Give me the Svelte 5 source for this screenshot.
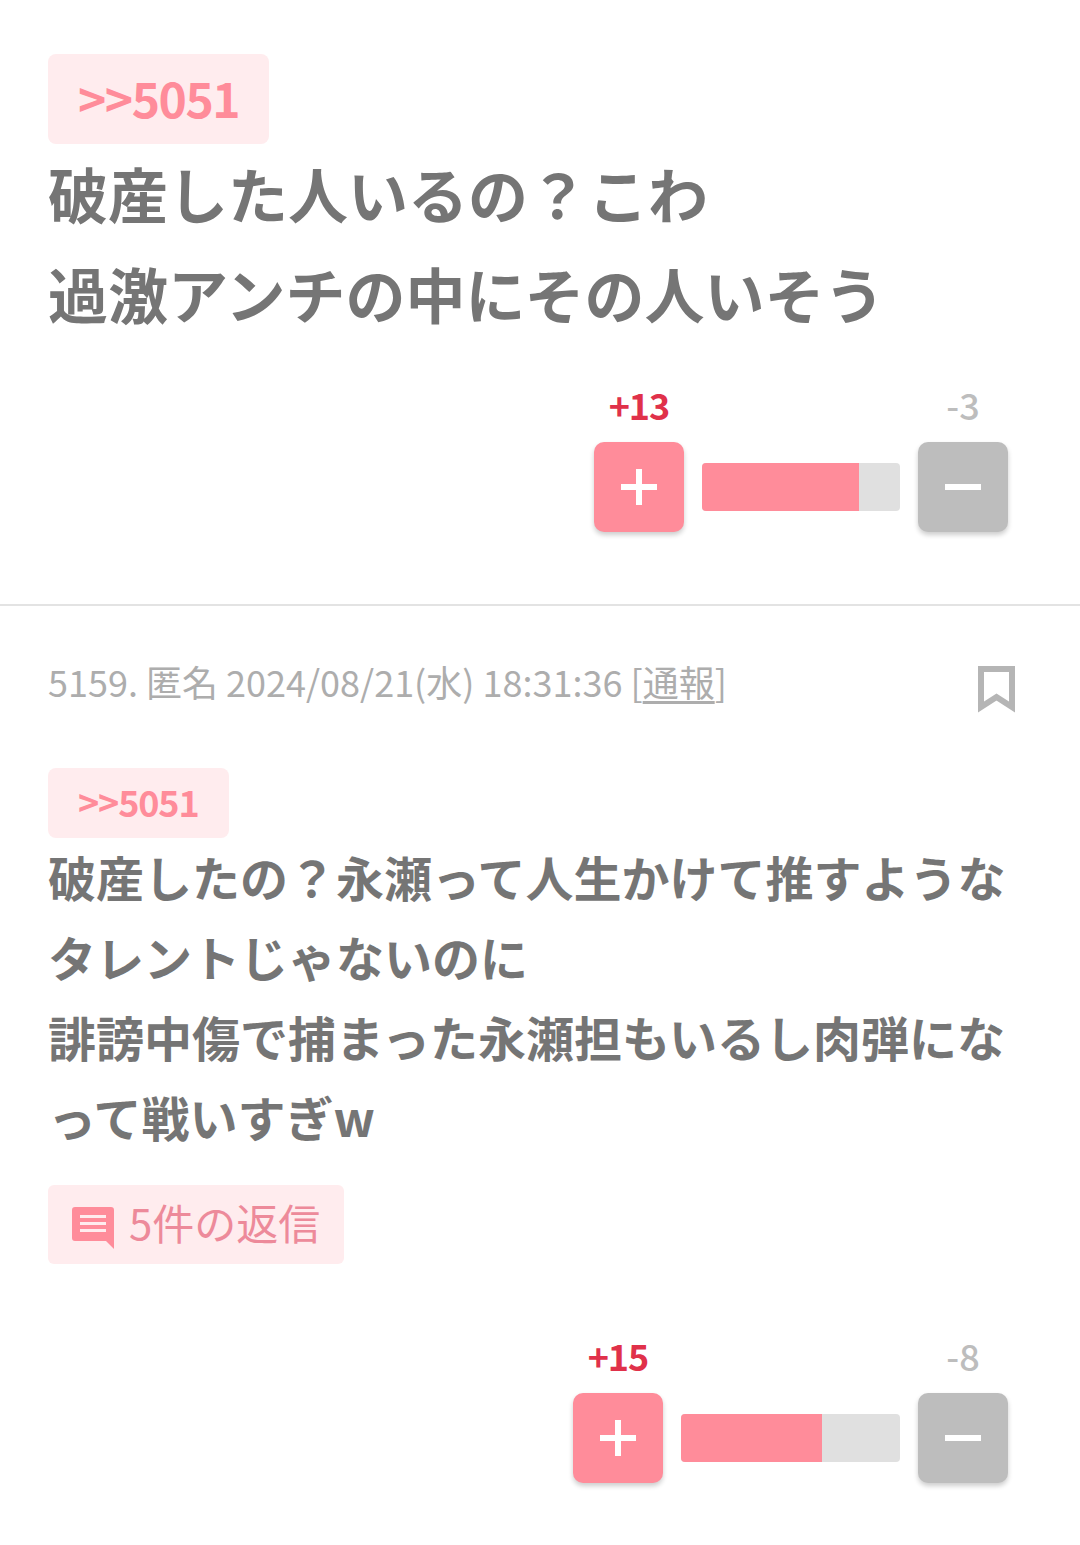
<script>
  const replies = [
    {
      big: true,
      lines: ['破産した人いるの？こわ', '過激アンチの中にその人いそう'],
      plus: 13,
      minus: 3,
      trackWidth: 198,
      pct: 79.5
    },
    {
      big: false,
      meta: { no: '5159.', name: '匿名', date: '2024/08/21(水) 18:31:36' },
      lines: ['破産したの？永瀬って人生かけて推すようなタレントじゃないのに', '誹謗中傷で捕まった永瀬担もいるし肉弾になって戦いすぎw'],
      replies: 5,
      plus: 15,
      minus: 8,
      trackWidth: 219,
      pct: 64.5
    }
  ];
</script>

<main class="page">
  {#each replies as r}
    <article class="post" class:big={r.big}>
      {#if r.meta}
        <div class="meta">
          <span>{r.meta.no} {r.meta.name} {r.meta.date} [<u>通報</u>]</span>
          <svg class="bookmark" viewBox="0 0 37 47" fill="none" stroke="#b5b5b5" stroke-width="6">
            <path d="M3 3h31v38L18.500 31 3 41z" />
          </svg>
        </div>
      {/if}
      <span class="anchor">&gt;&gt;5051</span>
      <div class="body">
        {#each r.lines as line}
          <div>{line}</div>
        {/each}
      </div>
      {#if r.replies}
        <span class="reply-btn">
          <svg viewBox="0 0 42 42" width="42" height="42">
            <path fill="#ff8c9a" d="M3 0h36a3 3 0 0 1 3 3v39l-8-8H3a3 3 0 0 1-3-3V3a3 3 0 0 1 3-3z" />
            <path fill="#ffecee" d="M8 8h26v3H8zM8 15h26v3H8zM8 22h26v3H8z" />
          </svg>
          <span class="reply-label">{r.replies}件の返信</span>
        </span>
      {/if}
      <div class="votes">
        <div class="vote">
          <span class="count plus">+{r.plus}</span>
          <span class="btn pink">
            <svg viewBox="0 0 36 36" width="36" height="36"><path fill="#fff" d="M15 0h6v15h15v6H21v15h-6V21H0v-6h15z" /></svg>
          </span>
        </div>
        <div class="track" style="width: {r.trackWidth}px"><div class="fill" style="width: {r.pct}%"></div></div>
        <div class="vote">
          <span class="count minus">-{r.minus}</span>
          <span class="btn grey">
            <svg viewBox="0 0 36 36" width="36" height="36"><path fill="#fff" d="M0 15h36v6H0z" /></svg>
          </span>
        </div>
      </div>
    </article>
  {/each}
</main>

<style>
  :global(body) {
    margin: 0;
    background: #fff;
  }
  .page {
    font-family: "Noto Sans CJK JP", "Noto Sans", sans-serif;
    color: #757575;
    height: 1545px;
    overflow: hidden;
  }
  .post {
    padding: 54px 72px 72px 48px;
  }
  .post.big {
    border-bottom: 2px solid #e3e3e3;
  }
  .post:not(.big) {
    padding-top: 44px;
  }
  .meta {
    display: flex;
    justify-content: space-between;
    margin-right: -7px;
    font-size: 36px;
    line-height: 62px;
    color: #adadad;
    margin-bottom: 52px;
    height: 66px;
  }
  .meta u {
    text-underline-offset: 4px;
  }
  .bookmark {
    width: 37px;
    height: 47px;
    margin-top: 16px;
  }
  .anchor {
    display: block;
    width: fit-content;
    background: #ffecee;
    color: #ff8c9a;
    font-weight: 700;
    font-size: 36px;
    line-height: 66px;
    padding: 0 30px 4px;
    border-radius: 8px;
    letter-spacing: -1.15px;
  }
  .big .anchor {
    font-size: 48px;
    line-height: 86px;
    letter-spacing: -1.45px;
  }
  .body {
    font-size: 48px;
    line-height: 80px;
    font-weight: 700;
    margin-right: -12px;
    margin-top: -2px;
  }
  .big .body {
    font-size: 60px;
    line-height: 100px;
    margin-top: -1px;
  }
  .reply-btn {
    display: flex;
    align-items: center;
    gap: 15px;
    width: fit-content;
    margin-top: 29px;
    height: 79px;
    padding: 0 24px;
    background: #ffecee;
    color: #ed8a9a;
    font-size: 42px;
    border-radius: 6px;
  }
  .reply-btn svg {
    margin-top: 6px;
  }
  .reply-label {
    margin-bottom: 6px;
  }
  .votes {
    display: flex;
    justify-content: flex-end;
    align-items: flex-end;
    gap: 18px;
    margin-top: 66px;
    margin-bottom: -72px;
  }
  .big .votes {
    margin-top: 36px;
    margin-bottom: 0;
  }
  .vote {
    display: flex;
    flex-direction: column;
    align-items: center;
    width: 90px;
  }
  .count {
    font-size: 36px;
    line-height: 50px;
    margin-bottom: 13px;
  }
  .plus {
    color: #e0314a;
    font-weight: 700;
    letter-spacing: -1px;
  }
  .minus {
    color: #bdbdbd;
    font-weight: 500;
  }
  .btn {
    width: 90px;
    height: 90px;
    border-radius: 10px;
    display: flex;
    align-items: center;
    justify-content: center;
    box-shadow: 0 3px 5px rgba(0, 0, 0, 0.2);
  }
  .pink {
    background: #ff8c9a;
  }
  .grey {
    background: #bdbdbd;
  }
  .track {
    height: 48px;
    margin-bottom: 21px;
    background: #e0e0e0;
    border-radius: 4px;
    overflow: hidden;
  }
  .fill {
    height: 100%;
    background: #ff8c9a;
  }
</style>
